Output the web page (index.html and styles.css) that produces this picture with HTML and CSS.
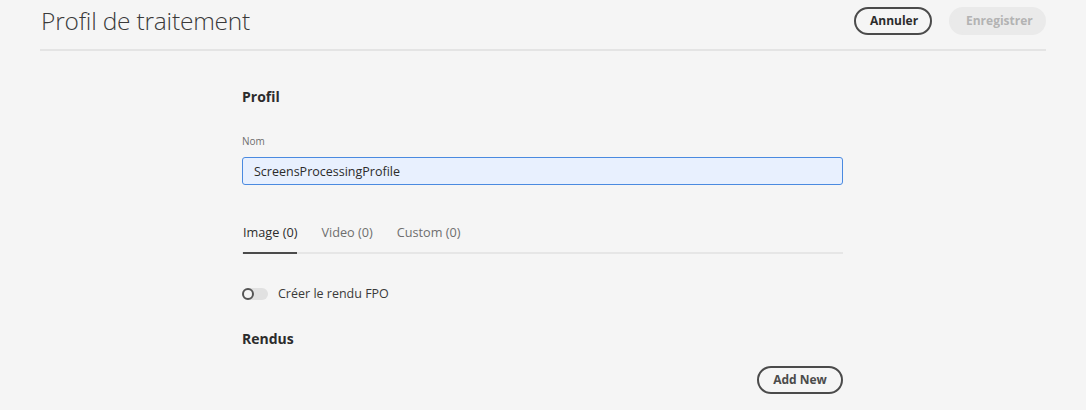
FILE: index.html
```html
<!DOCTYPE html>
<html lang="fr">
<head>
<meta charset="utf-8">
<title>Profil de traitement</title>
<link rel="stylesheet" href="styles.css">
</head>
<body>
<header class="top">
  <h1 class="title">Profil de traitement</h1>
  <div class="actions">
    <button class="btn btn-outline">Annuler</button>
    <button class="btn btn-disabled" disabled>Enregistrer</button>
  </div>
</header>
<main class="content">
  <h2 class="section">Profil</h2>
  <label class="field-label" for="nom">Nom</label>
  <input id="nom" class="field" type="text" value="ScreensProcessingProfile">
  <nav class="tabs">
    <span class="tab active">Image (0)</span>
    <span class="tab">Video (0)</span>
    <span class="tab">Custom (0)</span>
  </nav>
  <div class="switch-row">
    <span class="switch"><span class="knob"></span></span>
    <span class="switch-label">Créer le rendu FPO</span>
  </div>
  <h2 class="section rendus">Rendus</h2>
  <div class="add-row">
    <button class="btn btn-outline">Add New</button>
  </div>
</main>
</body>
</html>
```
FILE: styles.css
```css
* { box-sizing: border-box; }
html, body { margin: 0; padding: 0; }
body {
  background: #f5f5f5;
  font-family: "Open Sans", "Noto Sans", sans-serif;
  color: #2c2c2c;
  width: 1086px;
  height: 410px;
  overflow: hidden;
}
.top {
  margin: 0 40px 0 40px;
  height: 51px;
  border-bottom: 2px solid #e4e4e4;
  display: flex;
  align-items: flex-start;
  justify-content: space-between;
}
.title {
  margin: 5px 0 0 1px;
  font-weight: 300;
  font-size: 24.5px;
  line-height: 32px;
  color: #3a3a3a;
  letter-spacing: -0.2px;
}
.actions {
  display: flex;
  gap: 17px;
  margin-top: 7px;
}
.btn {
  font-family: inherit;
  font-weight: 700;
  font-size: 12px;
  height: 28px;
  border-radius: 14px;
  padding: 0 14px;
  line-height: 24px;
}
.btn-outline {
  background: transparent;
  border: 2px solid #4b4b4b;
  color: #2c2c2c;
}
.btn-disabled {
  background: #eaeaea;
  border: 2px solid #eaeaea;
  color: #b3b3b3;
  padding: 0 15px;
}
.top .btn-outline { width: 78px; }
.top .btn-disabled { width: 97px; }
.content {
  width: 601px;
  margin-left: 242px;
  display: flex;
  flex-direction: column;
}
.section {
  margin: 36px 0 0 0;
  font-size: 14px;
  font-weight: 700;
  line-height: 20px;
  color: #2c2c2c;
}
.field-label {
  margin-top: 27px;
  font-size: 10px;
  line-height: 14px;
  color: #6e6e6e;
}
.field {
  margin-top: 9px;
  height: 28px;
  width: 601px;
  border: 1px solid #4a8ae0;
  border-radius: 3px;
  background: #e8f0fe;
  font-family: inherit;
  font-size: 12.5px;
  color: #2c2c2c;
  padding: 0 11px;
  outline: none;
}
.tabs {
  margin-top: 36px;
  display: flex;
  gap: 24px;
  border-bottom: 2px solid #e6e6e6;
  height: 33px;
  padding-left: 1px;
}
.tab {
  font-size: 12.7px;
  line-height: 18px;
  color: #6e6e6e;
  padding-top: 2px;
  height: 33px;
  margin-bottom: -2px;
}
.tab.active {
  color: #2c2c2c;
  border-bottom: 2px solid #4b4b4b;
}
.switch-row {
  margin-top: 31px;
  display: flex;
  align-items: center;
  gap: 10px;
}
.switch {
  width: 26px;
  height: 12px;
  border-radius: 6px;
  background: #e1e1e1;
  position: relative;
  display: inline-block;
}
.knob {
  position: absolute;
  left: 0;
  top: 0;
  width: 12px;
  height: 12px;
  border-radius: 50%;
  background: #f5f5f5;
  border: 2px solid #555;
}
.switch-label {
  font-size: 12.5px;
  line-height: 18px;
  color: #3a3a3a;
}
.section.rendus { margin-top: 26px; }
.add-row {
  margin-top: 17px;
  display: flex;
  justify-content: flex-end;
}
.add-row .btn { width: 86px; padding: 0; color: #4b4b4b; }
```
